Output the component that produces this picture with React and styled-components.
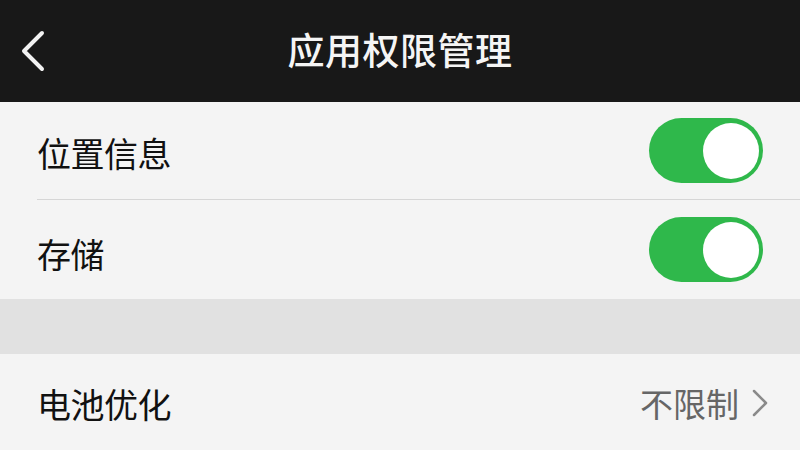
import React, { useState } from 'react'
import styled, { createGlobalStyle } from 'styled-components'

const GlobalStyle = createGlobalStyle`
  html, body {
    margin: 0;
    padding: 0;
    background: #f4f4f4;
    font-family: "Noto Sans CJK SC", "Noto Sans", sans-serif;
  }
`

const Page = styled.div`
  width: 800px;
  height: 450px;
  overflow: hidden;
  background: #f4f4f4;
  display: flex;
  flex-direction: column;
`

const TopBar = styled.div`
  height: 102px;
  background: #181818;
  display: grid;
  grid-template-columns: 80px 1fr 80px;
  align-items: center;
  flex-shrink: 0;
`

const BackButton = styled.button`
  background: none;
  border: none;
  padding: 0 0 0 18px;
  height: 100%;
  display: flex;
  align-items: center;
  cursor: pointer;
`

const Title = styled.h1`
  margin: 0;
  text-align: center;
  color: #f5f5f5;
  font-size: 37px;
  font-weight: 500;
  letter-spacing: 0.5px;
  padding-bottom: 4px;
`

const Group = styled.div`
  background: #f4f4f4;
  padding-left: 37px;
`

const Row = styled.div`
  height: ${({ h }) => h || 98}px;
  display: flex;
  align-items: center;
  justify-content: space-between;
  padding-right: 37px;
  border-bottom: ${({ divider }) => (divider ? '1px solid #d6d6d6' : 'none')};
  box-sizing: border-box;
`

const Label = styled.span`
  font-size: 34px;
  color: #111;
  letter-spacing: -0.5px;
  padding-top: ${({ drop }) => drop || 4}px;
`

const Gap = styled.div`
  height: 55px;
  background: #e1e1e1;
  flex-shrink: 0;
`

const Value = styled.span`
  display: flex;
  align-items: center;
  gap: 12px;
  font-size: 33px;
  color: #666;
  margin-right: -6px;
  padding-top: 2px;
`

const Track = styled.button`
  width: 114px;
  height: 65px;
  border-radius: 33px;
  border: none;
  padding: 0;
  background: ${({ on }) => (on ? '#2fb84b' : '#d0d0d0')};
  display: flex;
  align-items: center;
  justify-content: ${({ on }) => (on ? 'flex-end' : 'flex-start')};
  cursor: pointer;
`

const Knob = styled.span`
  width: 56px;
  height: 56px;
  margin: 0 4px;
  border-radius: 50%;
  background: #fff;
  display: block;
`

const Switch = ({ initial }) => {
  const [on, setOn] = useState(initial)
  return (
    <Track on={on ? 1 : 0} onClick={() => setOn(!on)}>
      <Knob />
    </Track>
  )
}

const App = () => {
  return (
    <>
      <GlobalStyle />
      <Page>
        <TopBar>
          <BackButton>
            <svg width="30" height="44" viewBox="0 0 30 44">
              <path d="M24 4 L6 22 L24 40" fill="none" stroke="#f2f2f2" strokeWidth="4" strokeLinecap="round" strokeLinejoin="round" />
            </svg>
          </BackButton>
          <Title>应用权限管理</Title>
          <div />
        </TopBar>
        <Group>
          <Row divider>
            <Label drop={4}>位置信息</Label>
            <Switch initial />
          </Row>
          <Row h={99}>
            <Label drop={8}>存储</Label>
            <Switch initial />
          </Row>
        </Group>
        <Gap />
        <Group>
          <Row h={95}>
            <Label drop={4}>电池优化</Label>
            <Value>
              不限制
              <svg width="18" height="30" viewBox="0 0 18 30">
                <path d="M3 3 L15 15 L3 27" fill="none" stroke="#8a8a8a" strokeWidth="2.5" strokeLinecap="round" strokeLinejoin="round" />
              </svg>
            </Value>
          </Row>
        </Group>
      </Page>
    </>
  )
}

export default App
